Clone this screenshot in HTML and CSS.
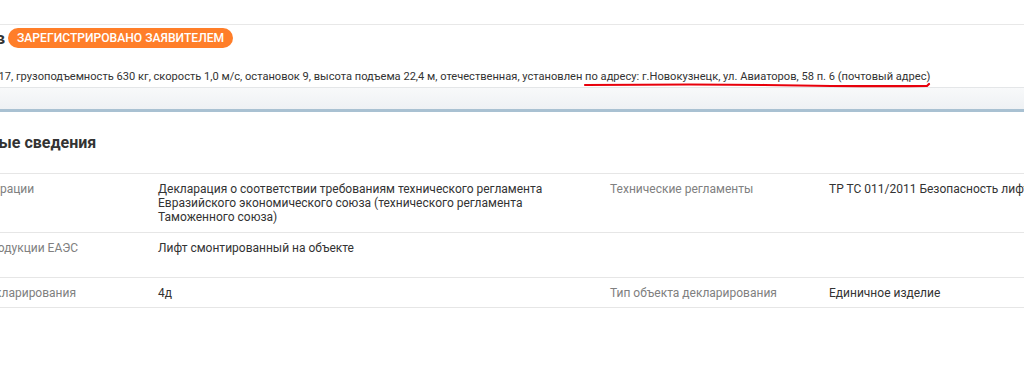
FILE: index.html
```html
<!DOCTYPE html>
<html>
<head>
<meta charset="utf-8">
<title>Сведения о декларации</title>
<link rel="stylesheet" href="styles.css">
</head>
<body>
<div class="topbar"></div>

<div class="header">
    <div class="title-row">
        <div class="title-clip"><h1 class="title">Декларация о соответствии для лифтов</h1></div>
        <span class="badge">Зарегистрировано заявителем</span>
    </div>
    <p class="desc">
        выпуск 2017, грузоподъемность 630 кг, скорость 1,0 м/с, остановок 9, высота подъема 22,4 м, отечественная, установлен <span class="marked">по адресу: г.Новокузнецк, ул. Авиаторов, 58 п. 6 (почтовый адрес)<svg class="scribble" width="350" height="8" viewBox="0 0 350 8"><path d="M1 4 C 60 3.5, 120 3, 180 4 S 300 5.5, 343 5 L 345 3" /></svg></span>
    </p>
</div>
<div class="band"></div>

<div class="section">
    <h2 class="section-title">Основные сведения</h2>
    <div class="row">
        <div class="label">Тип декларации</div>
        <div class="value">Декларация о соответствии требованиям технического регламента Евразийского экономического союза (технического регламента Таможенного союза)</div>
        <div class="label">Технические регламенты</div>
        <div class="value">ТР ТС 011/2011 Безопасность лифтов</div>
    </div>
    <div class="row tall">
        <div class="label">Группа продукции ЕАЭС</div>
        <div class="value">Лифт смонтированный на объекте</div>
        <div class="label"></div>
        <div class="value"></div>
    </div>
    <div class="row">
        <div class="label">Схема декларирования</div>
        <div class="value">4д</div>
        <div class="label">Тип объекта декларирования</div>
        <div class="value">Единичное изделие</div>
    </div>
</div>
</body>
</html>
```

FILE: styles.css
```css
body {
    margin: 0;
    font-family: Roboto, "Liberation Sans", sans-serif;
    color: #333;
    background-color: #fff;
    overflow: hidden;
}

.topbar {
    height: 24px;
    border-bottom: 1px solid #e8e8e8;
}

.header {
    margin-left: -57px;
    padding-top: 3px;
}

.title-row {
    display: flex;
    align-items: center;
    height: 20px;
    gap: 3px;
}

.title-clip {
    width: 62px;
    display: flex;
    justify-content: flex-end;
    overflow: hidden;
}

.title {
    margin: 0;
    font-size: 17px;
    font-weight: bold;
    white-space: nowrap;
    color: #333;
}

.badge {
    height: 20px;
    line-height: 20px;
    padding: 0 9px;
    border-radius: 10px;
    background-color: #ff7e29;
    color: #fff;
    font-size: 12.1px;
    font-weight: 500;
    text-transform: uppercase;
    white-space: nowrap;
}

.desc {
    margin: 22px 0 0;
    padding-bottom: 3px;
    font-size: 11.1px;
    line-height: 14px;
    text-indent: 2px;
    white-space: nowrap;
    color: #333;
}

.marked {
    position: relative;
}

.scribble {
    position: absolute;
    left: -1px;
    top: 11px;
    overflow: visible;
}

.scribble path {
    fill: none;
    stroke: #e8000b;
    stroke-width: 2.2;
    stroke-linecap: round;
}

.band {
    height: 21px;
    border-top: 1px solid #e4e6e8;
    border-bottom: 3px solid #a9c1d2;
    background: linear-gradient(#f8f9fa, #eef1f4);
}

.section-title {
    margin: 0 0 0 -57px;
    padding: 21px 0 20px;
    font-size: 16px;
    line-height: 20px;
    font-weight: bold;
    color: #333;
}

.row {
    display: grid;
    grid-template-columns: 215px 452px 219px 1fr;
    margin-left: -57px;
    padding: 8px 0 7px;
    border-top: 1px solid #e6e6e6;
    font-size: 12px;
    line-height: 14px;
}

.row:first-of-type {
    padding-bottom: 8px;
}

.row:last-child {
    border-bottom: 1px solid #e6e6e6;
}

.row.tall {
    min-height: 29px;
}

.label {
    padding-right: 30px;
    color: #808080;
}

.value {
    padding-right: 30px;
    color: #333;
}

.row .value:last-child {
    white-space: nowrap;
}
```
